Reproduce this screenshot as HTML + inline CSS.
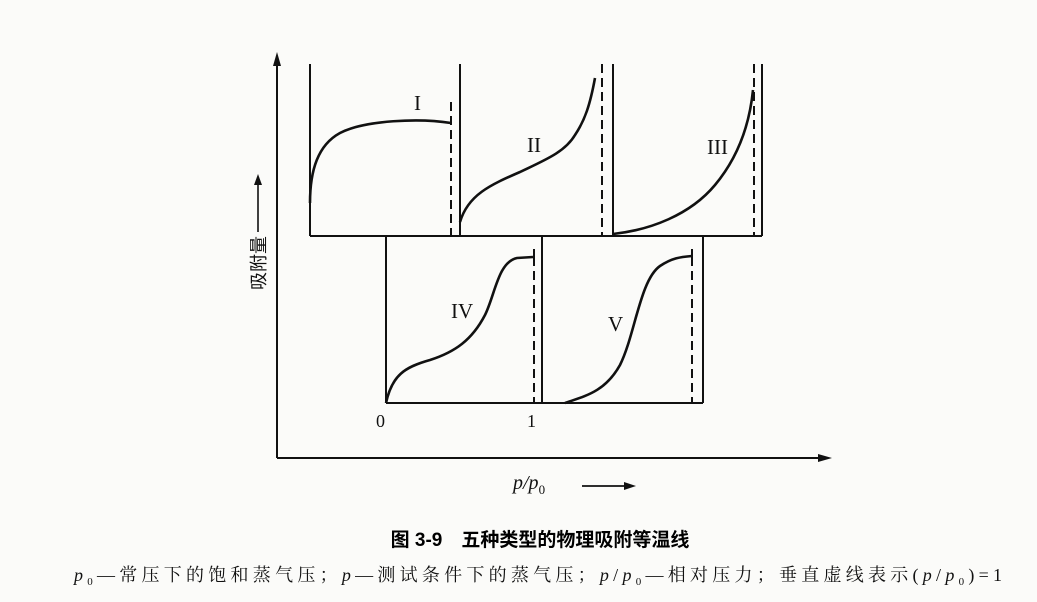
<!DOCTYPE html>
<html><head><meta charset="utf-8"><style>
html,body{margin:0;padding:0;background:#fbfbf9;}
svg{display:block}
</style></head><body>
<svg width="1037" height="602" viewBox="0 0 1037 602" xmlns="http://www.w3.org/2000/svg">
<rect width="1037" height="602" fill="#fbfbf9"/>
<g stroke="#111" stroke-width="2" fill="none">
<line x1="277" y1="62" x2="277" y2="458"/>
<line x1="277" y1="458" x2="822" y2="458"/>
<line x1="310" y1="64" x2="310" y2="236"/>
<line x1="460" y1="64" x2="460" y2="236"/>
<line x1="613" y1="64" x2="613" y2="236"/>
<line x1="762" y1="64" x2="762" y2="236"/>
<line x1="310" y1="236" x2="762" y2="236"/>
<line x1="386" y1="236" x2="386" y2="403"/>
<line x1="542" y1="236" x2="542" y2="403"/>
<line x1="703" y1="236" x2="703" y2="403"/>
<line x1="386" y1="403" x2="703" y2="403"/>
<g stroke-dasharray="9,5">
<line x1="451" y1="102" x2="451" y2="236"/>
<line x1="602" y1="64" x2="602" y2="236"/>
<line x1="754" y1="64" x2="754" y2="236"/>
<line x1="534" y1="257" x2="534" y2="403"/>
<line x1="692" y1="257" x2="692" y2="403"/>
</g>
<line x1="534" y1="249" x2="534" y2="258"/>
<line x1="692" y1="249" x2="692" y2="258"/>
<g stroke-width="2.6">
<path d="M310 203 C310 170 318 145 340 133 C365 120 420 118 451 123"/>
<path d="M460 222 C468 195 490 185 520 172 C545 160 565 152 575 135 C585 120 590 105 595 78"/>
<path d="M613 234 C650 230 690 215 715 185 C740 155 750 120 753 90"/>
<path d="M386 403 C392 375 405 367 430 360 C455 352 472 340 485 315 C495 295 498 262 517 258 L533 257"/>
<path d="M565 403 C585 396 605 392 620 365 C635 335 640 280 660 266 C672 258 680 257 692 256"/>
</g>
</g>
<polygon points="277,52 273,66 281,66" fill="#111"/>
<polygon points="832,458 818,454 818,462" fill="#111"/>
<g font-family="Liberation Serif, serif" font-size="21" fill="#111">
<text x="414" y="110">I</text>
<text x="527" y="152">II</text>
<text x="707" y="154">III</text>
<text x="451" y="318">IV</text>
<text x="608" y="331">V</text>
<text x="376" y="427" font-size="18">0</text>
<text x="527" y="427" font-size="18">1</text>
<text x="513" y="489" font-style="italic" font-size="20">p/p<tspan font-size="13" font-style="normal" dy="5">0</tspan></text>
</g>
<line x1="582" y1="486" x2="628" y2="486" stroke="#111" stroke-width="1.8"/>
<polygon points="636,486 624,482 624,490" fill="#111"/>
<g transform="translate(265,290) rotate(-90)">
<text x="0" y="0" font-family="Liberation Sans, 'Noto Sans CJK SC', sans-serif" font-size="18" fill="#111">吸附量</text>
<line x1="58" y1="-7" x2="108" y2="-7" stroke="#111" stroke-width="1.6"/>
<polygon points="116,-7 105,-11 105,-3" fill="#111"/>
</g>
<text x="540" y="546" text-anchor="middle" font-family="Liberation Sans, 'Noto Sans CJK SC', sans-serif" font-weight="bold" font-size="19" fill="#000">图 3-9　五种类型的物理吸附等温线</text>
<text x="74" y="581" font-family="Liberation Serif, 'Noto Serif CJK SC', serif" font-size="18" fill="#111" textLength="928"><tspan font-style="italic">p</tspan><tspan font-size="11" dy="4">0</tspan><tspan dy="-4">—常压下的饱和蒸气压；</tspan><tspan font-style="italic">p</tspan>—测试条件下的蒸气压；<tspan font-style="italic">p</tspan>/<tspan font-style="italic">p</tspan><tspan font-size="11" dy="4">0</tspan><tspan dy="-4">—相对压力；垂直虚线表示(</tspan><tspan font-style="italic">p</tspan>/<tspan font-style="italic">p</tspan><tspan font-size="11" dy="4">0</tspan><tspan dy="-4">)=1</tspan></text>
</svg>
</body></html>
